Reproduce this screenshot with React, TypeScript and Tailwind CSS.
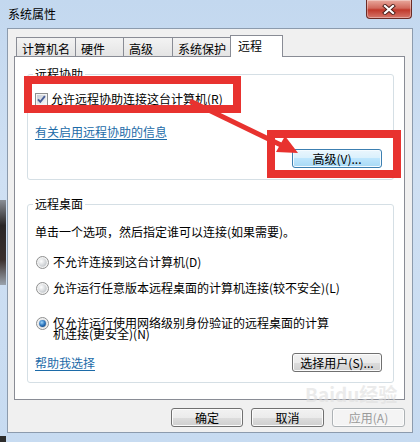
import React from "react";

const font = "font-['Noto_Sans_CJK_SC','Noto_Sans',sans-serif]";

function Checkbox() {
  return (
    <svg width="13" height="13" viewBox="0 0 13 13" className="shrink-0">
      <defs>
        <linearGradient id="cbfill" x1="0" y1="0" x2="1" y2="1">
          <stop offset="0" stopColor="#c6ccd4" />
          <stop offset="1" stopColor="#f7f7f7" />
        </linearGradient>
      </defs>
      <rect x="0.5" y="0.5" width="12" height="12" fill="#f4f4f4" stroke="#8e8f8f" />
      <rect x="2" y="2" width="9" height="9" fill="url(#cbfill)" />
      <path d="M3 6.3 L5.3 8.9 L9.9 3.2" fill="none" stroke="#4a5f97" strokeWidth="1.9" />
    </svg>
  );
}

function Radio({ checked }: { checked?: boolean }) {
  return (
    <svg width="13" height="13" viewBox="0 0 13 13" className="shrink-0">
      <defs>
        <radialGradient id="rfill" cx="0.35" cy="0.35" r="0.7">
          <stop offset="0" stopColor="#ffffff" />
          <stop offset="1" stopColor="#c4c8cc" />
        </radialGradient>
        <radialGradient id="rdot" cx="0.4" cy="0.35" r="0.7">
          <stop offset="0" stopColor="#9fd6fb" />
          <stop offset="0.6" stopColor="#2f78c0" />
          <stop offset="1" stopColor="#164e8a" />
        </radialGradient>
      </defs>
      <circle cx="6.5" cy="6.5" r="6" fill="#f2f2f2" stroke="#8e8f8f" />
      <circle cx="6.5" cy="6.5" r="4.2" fill="url(#rfill)" />
      {checked && <circle cx="6.5" cy="6.5" r="3.4" fill="url(#rdot)" />}
    </svg>
  );
}

function Btn({
  children,
  w,
  variant = "normal",
}: {
  children: React.ReactNode;
  w: string;
  variant?: "normal" | "focus" | "disabled";
}) {
  const styles = {
    normal:
      "border-[#707070] text-black bg-[linear-gradient(#f2f2f2_0%,#ebebeb_50%,#dddddd_50%,#cfcfcf_100%)] shadow-[inset_0_0_0_1px_#fbfbfb]",
    focus:
      "border-[#3c7fb1] text-black bg-[linear-gradient(#eaf6fd_0%,#d9f0fc_50%,#bee6fd_50%,#a7d9f5_100%)] shadow-[inset_0_0_0_1px_#f4fbff]",
    disabled:
      "border-[#adb2b5] text-[#9a9a9a] bg-[#f4f4f4] shadow-[inset_0_0_0_1px_#fcfcfc]",
  }[variant];
  return (
    <div
      className={`flex h-[19px] items-center justify-center rounded-[3px] border text-[12px] leading-none ${w} ${styles}`}
    >
      {children}
    </div>
  );
}

function Link({ children }: { children: React.ReactNode }) {
  return (
    <span className="text-[12px] leading-[14px] text-[#1c6ba8] underline underline-offset-[2px]">
      {children}
    </span>
  );
}

const tabs = [
  { label: "计算机名", w: "w-[60px]" },
  { label: "硬件", w: "w-[49px]" },
  { label: "高级", w: "w-[50px]" },
  { label: "系统保护", w: "w-[59px]" },
];

export default function App() {
  return (
    <div
      className={`relative h-[442px] w-[420px] overflow-hidden bg-[linear-gradient(180deg,#c3d8ef_0%,#cfe0f3_40%,#c7dbf1_100%)] text-[12px] leading-[14px] text-black ${font}`}
    >
      {/* title bar */}
      <div className="flex h-[28px] items-start justify-between pl-[8px] pr-[8px]">
        <span className="pt-[6px] text-[12px] leading-[16px] text-black">系统属性</span>
        <div className="flex h-[19px] w-[46px] items-center justify-center rounded-b-[4px] border border-t-0 border-[#6b2b25] bg-[linear-gradient(#e9a99d_0%,#d1695c_45%,#c0392b_55%,#d6776b_100%)] shadow-[inset_0_0_0_1px_rgba(255,255,255,0.35)]">
          <svg width="14" height="11" viewBox="0 0 14 11">
            <path d="M3 2 L11 9 M11 2 L3 9" stroke="#4a1d18" strokeWidth="4" strokeLinecap="square" />
            <path d="M3 2 L11 9 M11 2 L3 9" stroke="#ffffff" strokeWidth="2.2" strokeLinecap="square" />
          </svg>
        </div>
      </div>

      {/* client area */}
      <div className="ml-[7px] flex h-[405px] w-[406px] flex-col border border-[#8c9bad] bg-[#f0f0f0]">
        {/* tabs */}
        <div className="relative z-10 flex h-[27px] items-end pl-[8px] pt-[6px]">
          {tabs.map((t, i) => (
            <div
              key={t.label}
              className={`${t.w} ${i > 0 ? "-ml-px" : ""} h-[19px] border border-b-0 border-[#898c95] bg-[linear-gradient(#f3f3f3,#e4e4e4)] pl-[5px] pt-[4px] text-[12px] leading-[13px]`}
            >
              {t.label}
            </div>
          ))}
          <div className="-mb-px -ml-px h-[22px] w-[53px] border border-b-0 border-[#898c95] bg-white pl-[7px] pt-[3px] text-[12px] leading-[13px]">
            远程
          </div>
        </div>

        {/* panel */}
        <div className="ml-[6px] flex h-[344px] w-[391px] flex-col border border-[#898c95] bg-white">
          <fieldset className="ml-[12px] mt-[10px] flex w-[367px] flex-col rounded-[3px] border border-[#d5dfe5] pb-[11px]">
            <legend className="ml-[5px] px-[2px] text-[12px] leading-[14px]">远程协助</legend>
            <div className="mt-[11px] flex h-[14px] items-center gap-[3px] pl-[7px]">
              <Checkbox />
              <span>允许远程协助连接这台计算机(R)</span>
            </div>
            <div className="mt-[19px] flex pl-[7px]">
              <Link>有关启用远程协助的信息</Link>
            </div>
            <div className="mr-[11px] mt-[10px] self-end">
              <Btn w="w-[90px]" variant="focus">高级(V)...</Btn>
            </div>
          </fieldset>

          <fieldset className="ml-[12px] mt-[17px] flex w-[367px] flex-col rounded-[3px] border border-[#d5dfe5] pb-[10px]">
            <legend className="ml-[5px] px-[2px] text-[12px] leading-[14px]">远程桌面</legend>
            <div className="mt-[14px] pl-[7px]">单击一个选项，然后指定谁可以连接(如果需要)。</div>
            <div className="mt-[16px] flex h-[14px] items-center gap-[4px] pl-[8px]">
              <Radio />
              <span>不允许连接到这台计算机(D)</span>
            </div>
            <div className="mt-[12px] flex h-[14px] items-center gap-[4px] pl-[8px]">
              <Radio />
              <span>允许运行任意版本远程桌面的计算机连接(较不安全)(L)</span>
            </div>
            <div className="mt-[22px] flex items-start gap-[4px] pl-[8px]">
              <Radio checked />
              <span className="w-[280px] leading-[11px]">
                仅允许运行使用网络级别身份验证的远程桌面的计算机连接(更安全)(N)
              </span>
            </div>
            <div className="mt-[14px] flex items-center justify-between pl-[7px] pr-[11px]">
              <Link>帮助我选择</Link>
              <Btn w="w-[90px]">选择用户(S)...</Btn>
            </div>
          </fieldset>
        </div>

        {/* dialog buttons */}
        <div className="mt-[8px] flex justify-end gap-[8px] pr-[7px]">
          <Btn w="w-[72px]">确定</Btn>
          <Btn w="w-[73px]">取消</Btn>
          <Btn w="w-[73px]" variant="disabled">应用(A)</Btn>
        </div>
      </div>

      {/* desktop showing through the glass frame */}
      <div className="absolute left-0 top-[200px] h-[85px] w-[6px] bg-[linear-gradient(#8a8f96,#2a2626_30%,#3a2f2c_70%,#9aa3ad)]" />
      <div className="absolute bottom-0 left-0 h-[6px] w-[6px] bg-[#2d2d2d]" />

      {/* watermark */}
      <div className="pointer-events-none absolute left-[305px] top-[384px] text-[19px] font-bold leading-[19px] text-[#dedede] opacity-60">
        Baidu经验
      </div>

      {/* annotations */}
      <div className="pointer-events-none absolute left-[24px] top-[76px] h-[37px] w-[217px] border-[8px] border-[#e8322f]" />
      <div className="pointer-events-none absolute left-[267px] top-[130px] h-[48px] w-[134px] border-[8px] border-[#e8322f]" />
      <svg className="pointer-events-none absolute left-0 top-0" width="420" height="442">
        <line x1="190" y1="101" x2="283" y2="146" stroke="#e8322f" strokeWidth="5" />
        <polygon points="298,153 276,152 285,136" fill="#e8322f" />
      </svg>
    </div>
  );
}
